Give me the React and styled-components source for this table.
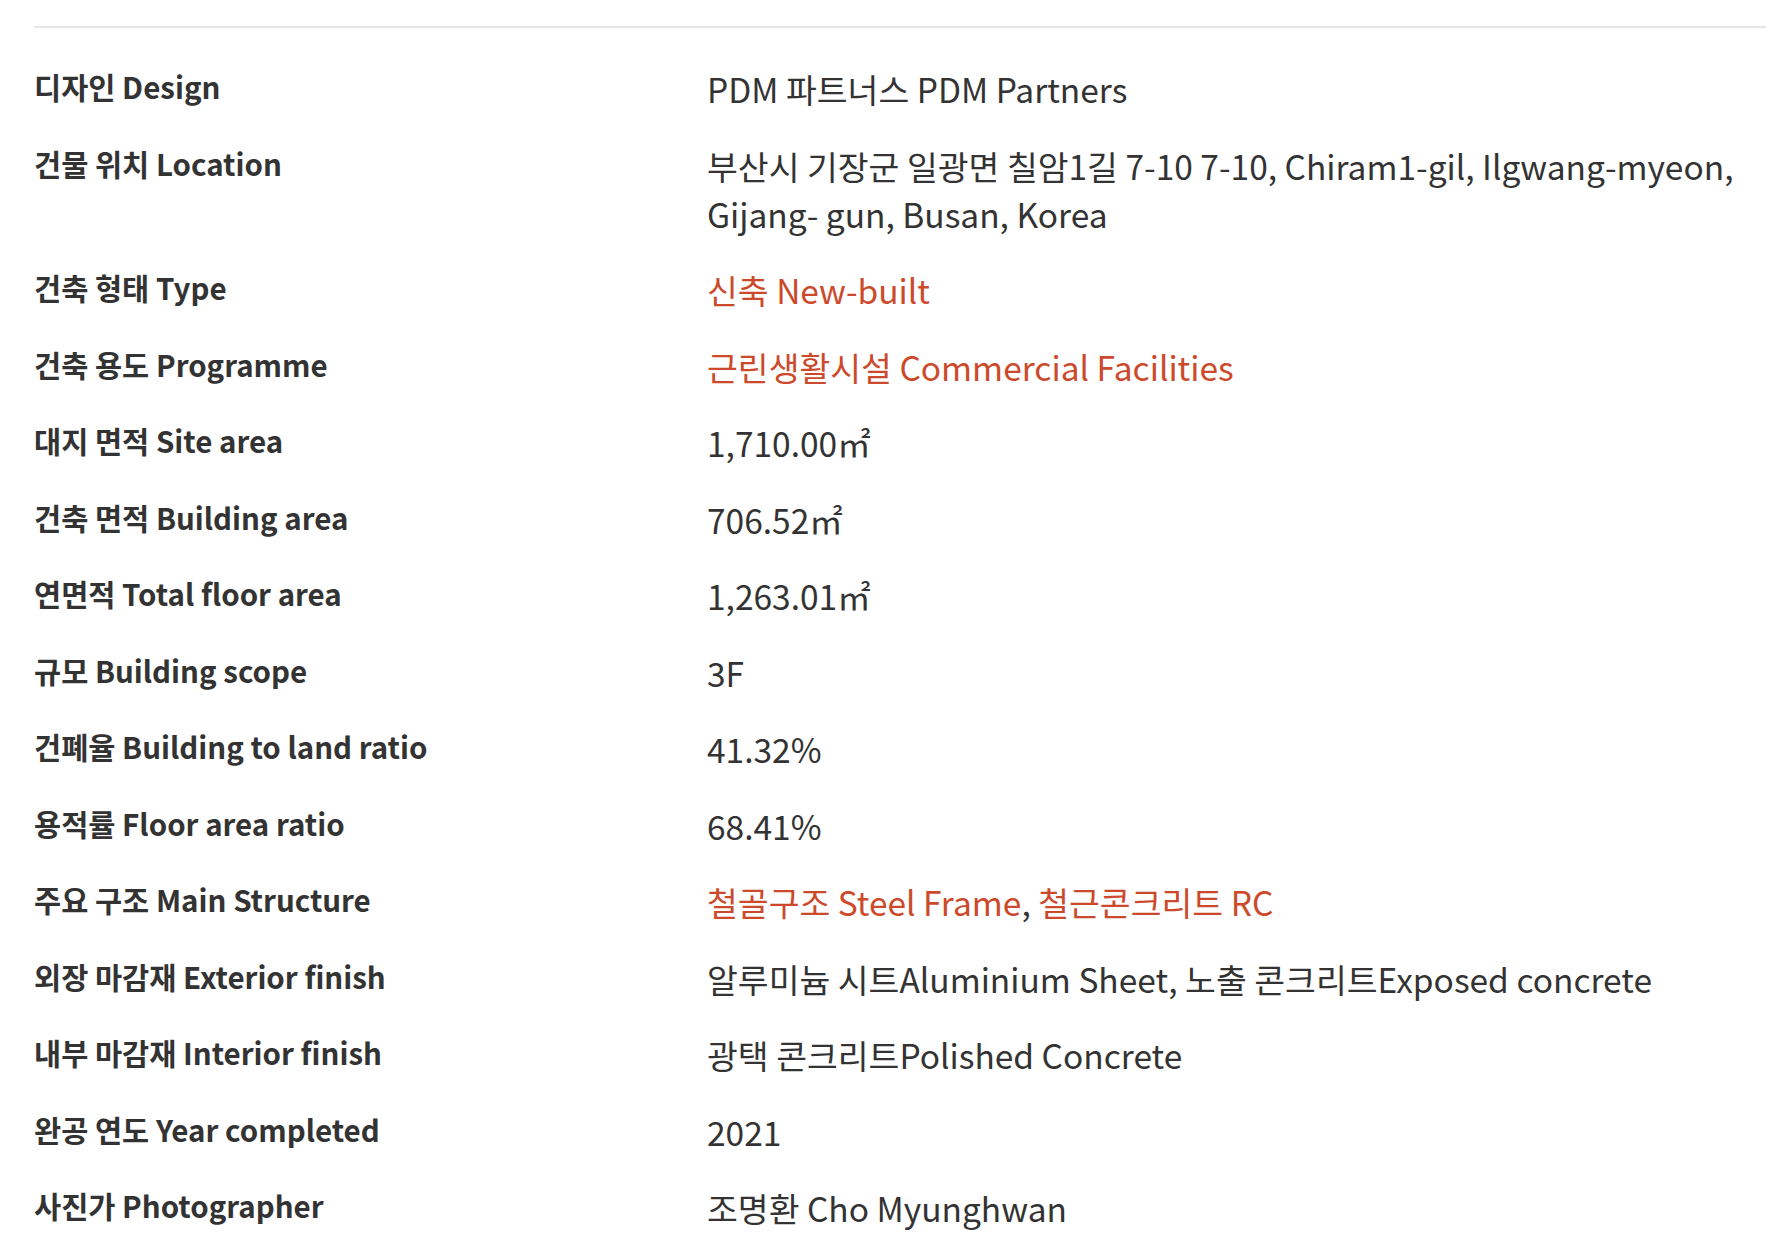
import React from "react";
import styled, { createGlobalStyle } from "styled-components";

const Global = createGlobalStyle`
  html, body { margin: 0; padding: 0; background: #ffffff; }
  body { font-family: "Noto Sans CJK KR", "Noto Sans", sans-serif; color: #333333; }
`;

const Page = styled.div`
  padding: 0 0 0 34px;
`;

const Divider = styled.hr`
  margin: 26px 0 0 0;
  border: 0;
  border-top: 2px solid #e6e6e6;
  width: calc(100% + 10px);
`;

const InfoList = styled.dl`
  margin: 34px 0 0 0;
  display: grid;
  grid-template-columns: 673px 1fr;
  align-items: start;
  row-gap: 25.5px;
`;

const Label = styled.dt`
  margin: 0;
  font-size: 29.5px;
  font-weight: 700;
  line-height: 48px;
  color: #333333;
`;

const Value = styled.dd`
  margin: 0;
  padding-top: 3px;
  font-size: 33.5px;
  font-weight: 400;
  line-height: 48px;
  color: #333333;
`;

const Tag = styled.span`
  color: #cc4a2b;
`;

const rows = [
  ["디자인 Design", "PDM 파트너스 PDM Partners"],
  ["건물 위치 Location", "부산시 기장군 일광면 칠암1길 7-10 7-10, Chiram1-gil, Ilgwang-myeon, Gijang- gun, Busan, Korea"],
  ["건축 형태 Type", <Tag>신축 New-built</Tag>],
  ["건축 용도 Programme", <Tag>근린생활시설 Commercial Facilities</Tag>],
  ["대지 면적 Site area", "1,710.00㎡"],
  ["건축 면적 Building area", "706.52㎡"],
  ["연면적 Total floor area", "1,263.01㎡"],
  ["규모 Building scope", "3F"],
  ["건폐율 Building to land ratio", "41.32%"],
  ["용적률 Floor area ratio", "68.41%"],
  ["주요 구조 Main Structure", <><Tag>철골구조 Steel Frame</Tag>, <Tag>철근콘크리트 RC</Tag></>],
  ["외장 마감재 Exterior finish", "알루미늄 시트Aluminium Sheet, 노출 콘크리트Exposed concrete"],
  ["내부 마감재 Interior finish", "광택 콘크리트Polished Concrete"],
  ["완공 연도 Year completed", "2021"],
  ["사진가 Photographer", "조명환 Cho Myunghwan"],
];

export default function App() {
  return (
    <>
      <Global />
      <Page>
        <Divider />
        <InfoList>
          {rows.map(([label, value], i) => (
            <React.Fragment key={i}>
              <Label>{label}</Label>
              <Value>{value}</Value>
            </React.Fragment>
          ))}
        </InfoList>
      </Page>
    </>
  );
}
